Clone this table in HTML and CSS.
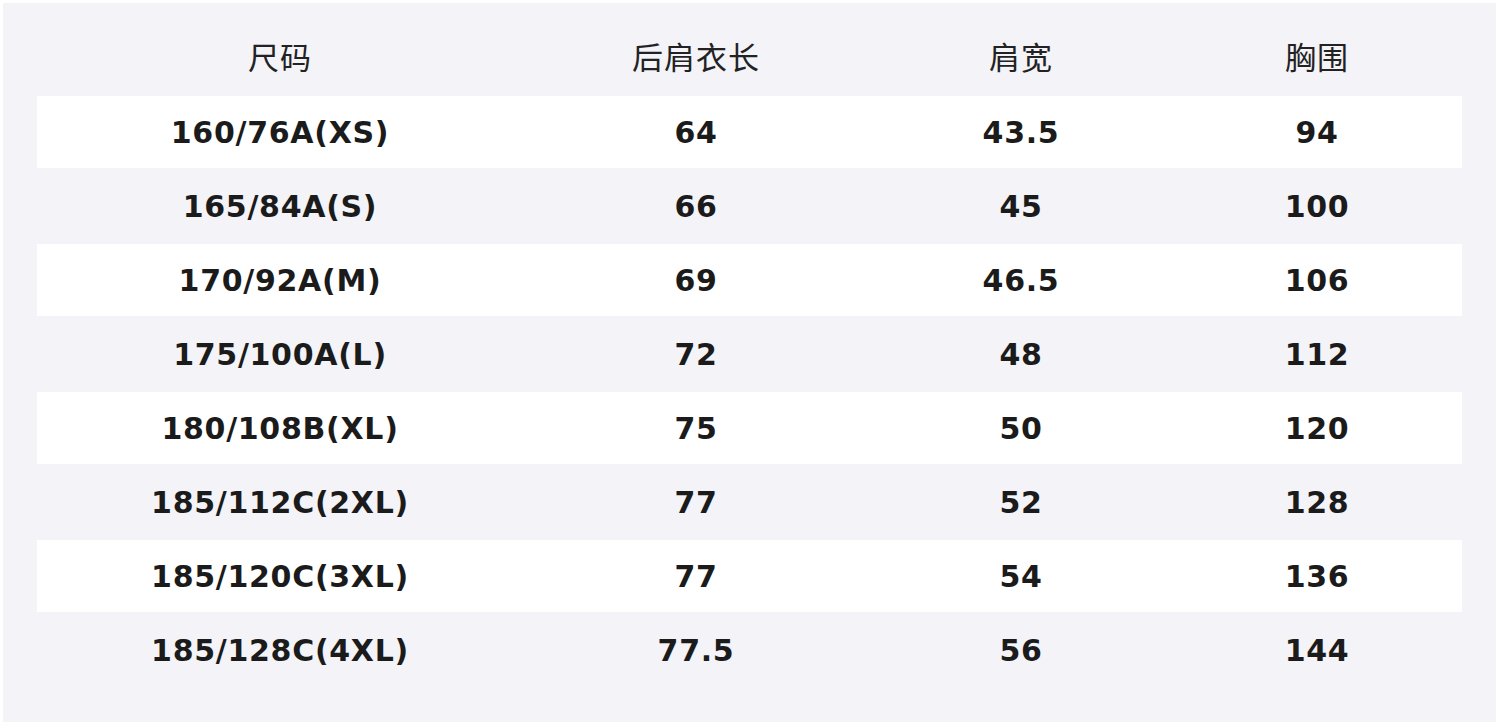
FILE: index.html
```html
<!DOCTYPE html>
<html lang="zh-CN">
<head>
<meta charset="utf-8">
<title>尺码表</title>
<link rel="stylesheet" href="styles.css">
</head>
<body>
<div class="panel">
  <div class="row head">
    <div class="cell">尺码</div><div class="cell">后肩衣长</div><div class="cell">肩宽</div><div class="cell">胸围</div>
  </div>
  <div class="row odd"><div class="cell">160/76A(XS)</div><div class="cell">64</div><div class="cell">43.5</div><div class="cell">94</div></div>
  <div class="row even"><div class="cell">165/84A(S)</div><div class="cell">66</div><div class="cell">45</div><div class="cell">100</div></div>
  <div class="row odd"><div class="cell">170/92A(M)</div><div class="cell">69</div><div class="cell">46.5</div><div class="cell">106</div></div>
  <div class="row even"><div class="cell">175/100A(L)</div><div class="cell">72</div><div class="cell">48</div><div class="cell">112</div></div>
  <div class="row odd"><div class="cell">180/108B(XL)</div><div class="cell">75</div><div class="cell">50</div><div class="cell">120</div></div>
  <div class="row even"><div class="cell">185/112C(2XL)</div><div class="cell">77</div><div class="cell">52</div><div class="cell">128</div></div>
  <div class="row odd"><div class="cell">185/120C(3XL)</div><div class="cell">77</div><div class="cell">54</div><div class="cell">136</div></div>
  <div class="row even"><div class="cell">185/128C(4XL)</div><div class="cell">77.5</div><div class="cell">56</div><div class="cell">144</div></div>
</div>
</body>
</html>
```
FILE: styles.css
```css
html, body {
  margin: 0;
  padding: 0;
  background: #ffffff;
}
body {
  padding: 3px;
  font-family: "DejaVu Sans", "Noto Sans CJK SC", sans-serif;
  color: #1b1b1b;
}
.panel {
  width: 1493px;
  height: 719px;
  box-sizing: border-box;
  background: #f3f3f8;
  padding: 0 34px 34px 34px;
  display: flex;
  flex-direction: column;
}
.row {
  display: grid;
  grid-template-columns: 486px 346px 304px 288px;
  align-items: center;
}
.cell {
  text-align: center;
  white-space: nowrap;
}
.head {
  height: 93px;
  padding-top: 12px;
  box-sizing: border-box;
  font-family: "Noto Sans CJK SC", sans-serif;
  font-size: 31px;
  font-weight: 400;
  letter-spacing: 1px;
  color: #222222;
}
.odd, .even {
  font-size: 30px;
  font-weight: 700;
  letter-spacing: 0.7px;
}
.odd {
  height: 72px;
  background: #ffffff;
}
.even {
  height: 76px;
}
```
